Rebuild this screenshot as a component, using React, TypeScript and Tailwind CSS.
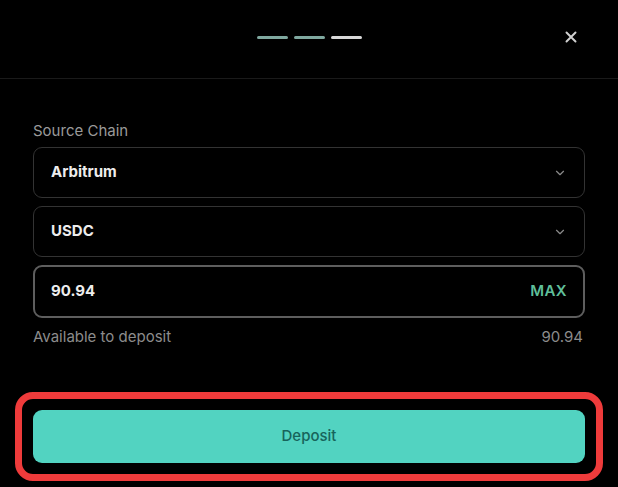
import React from 'react';

function Chevron() {
  return (
    <svg width="14" height="14" viewBox="0 0 24 24" fill="none" stroke="#8a8a8a" strokeWidth="2" strokeLinecap="round" strokeLinejoin="round">
      <path d="m6 9 6 6 6-6" />
    </svg>
  );
}

function SelectBox({ label }: { label: string }) {
  return (
    <div className="flex h-[51px] items-center justify-between rounded-[9px] border border-[#333] px-[17px]">
      <span className="text-[15px] font-bold text-[#ededed]">{label}</span>
      <Chevron />
    </div>
  );
}

export default function App() {
  return (
    <div className="flex h-[487px] w-[618px] flex-col bg-black font-['Inter',sans-serif]">
      {/* header with step dashes */}
      <header className="relative flex h-[79px] shrink-0 items-center justify-center border-b border-[#1a1a1a]">
        <div className="mb-[4px] flex gap-[6px]">
          <span className="h-[3px] w-[31px] rounded-full bg-[#7fa89f]" />
          <span className="h-[3px] w-[31px] rounded-full bg-[#7fa89f]" />
          <span className="h-[3px] w-[31px] rounded-full bg-[#d8d8d8]" />
        </div>
        <button className="absolute right-[38px] top-[28px] text-[#d0d0d0]">
          <svg width="18" height="18" viewBox="0 0 24 24" fill="none" stroke="currentColor" strokeWidth="2.6" strokeLinecap="round">
            <path d="M18 6 6 18M6 6l12 12" />
          </svg>
        </button>
      </header>

      <main className="flex flex-col px-[33px] pt-[42px]">
        <p className="mb-[6px] text-[15px] leading-[20px] text-[#9a9a9a]">Source Chain</p>
        <div className="flex flex-col gap-[8px]">
          <SelectBox label="Arbitrum" />
          <SelectBox label="USDC" />
          <div className="flex h-[53px] items-center justify-between rounded-[9px] border-2 border-[#5e5e5e] px-[16px]">
            <span className="text-[15px] font-bold text-[#ededed]">90.94</span>
            <span className="text-[15px] font-semibold tracking-wide text-[#5fbf9a]">MAX</span>
          </div>
        </div>
        <div className="mt-[9px] flex justify-between text-[15px] leading-[20px] text-[#8c8c8c]">
          <span>Available to deposit</span>
          <span className="pr-[2px]">90.94</span>
        </div>

        <div className="-mx-[18px] mt-[45px] rounded-[18px] border-[7px] border-[#ef3b3b] p-[11px]">
          <button className="flex h-[53px] w-full items-center justify-center rounded-[9px] bg-[#52d3c1] text-[15px] font-medium text-[#17645b]">
            Deposit
          </button>
        </div>
      </main>
    </div>
  );
}
